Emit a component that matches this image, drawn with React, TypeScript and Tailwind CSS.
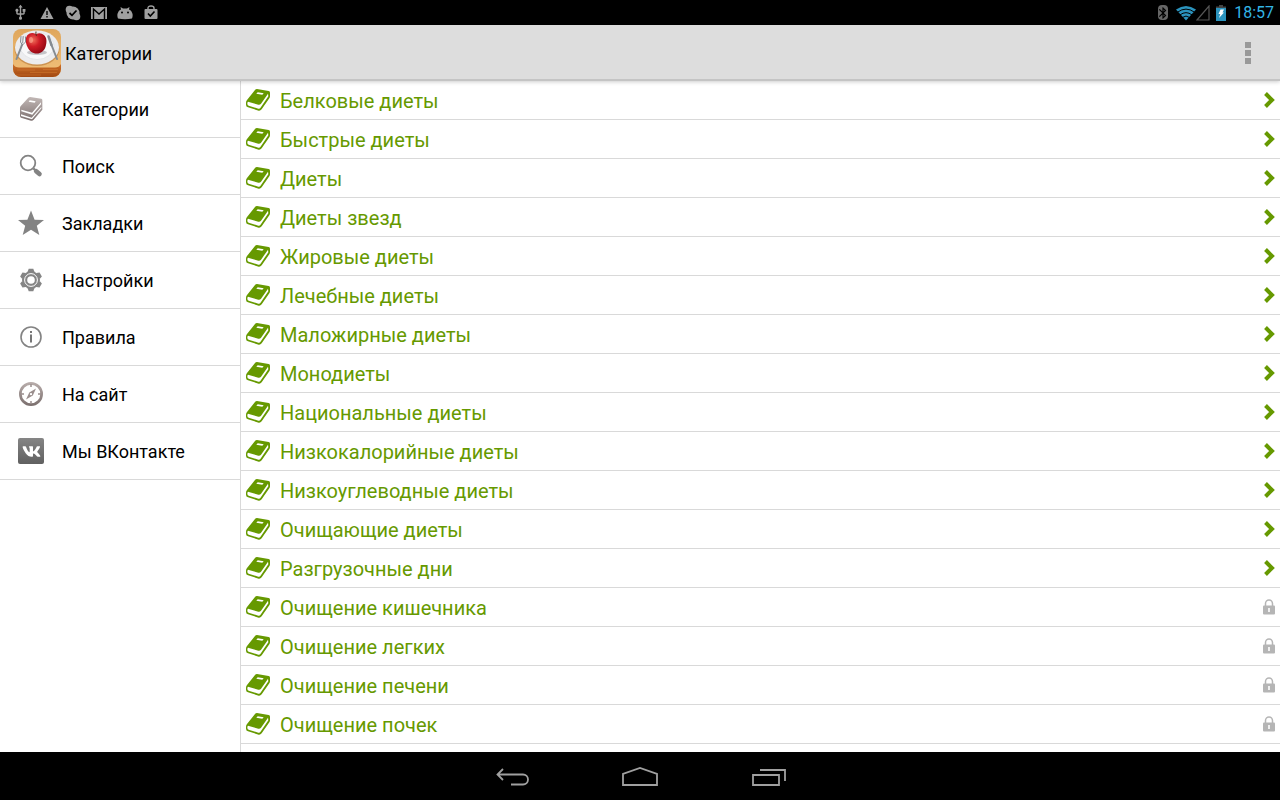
import type { ReactNode } from "react";
import { FaVk } from "react-icons/fa";
import { MdBluetooth, MdUsb } from "react-icons/md";

const categories = [
  { title: "Белковые диеты", locked: false },
  { title: "Быстрые диеты", locked: false },
  { title: "Диеты", locked: false },
  { title: "Диеты звезд", locked: false },
  { title: "Жировые диеты", locked: false },
  { title: "Лечебные диеты", locked: false },
  { title: "Маложирные диеты", locked: false },
  { title: "Монодиеты", locked: false },
  { title: "Национальные диеты", locked: false },
  { title: "Низкокалорийные диеты", locked: false },
  { title: "Низкоуглеводные диеты", locked: false },
  { title: "Очищающие диеты", locked: false },
  { title: "Разгрузочные дни", locked: false },
  { title: "Очищение кишечника", locked: true },
  { title: "Очищение легких", locked: true },
  { title: "Очищение печени", locked: true },
  { title: "Очищение почек", locked: true },
];

const menuItems: { title: string; href: string; icon: ReactNode }[] = [
  { title: "Категории", href: "#categories", icon: <BooksIcon /> },
  { title: "Поиск", href: "#search", icon: <SearchIcon /> },
  { title: "Закладки", href: "#bookmarks", icon: <StarIcon /> },
  { title: "Настройки", href: "#settings", icon: <GearIcon /> },
  { title: "Правила", href: "#rules", icon: <InfoIcon /> },
  { title: "На сайт", href: "#site", icon: <CompassIcon /> },
  { title: "Мы ВКонтакте", href: "#vk", icon: <VkIcon /> },
];

function BooksIcon() {
  return (
    <svg width="24" height="24" viewBox="0 0 72 72" aria-hidden="true">
      <defs>
        <linearGradient id="books" x1="0" y1="0" x2="0" y2="72" gradientUnits="userSpaceOnUse">
          <stop offset="0" stopColor="#c2b8b6" />
          <stop offset="1" stopColor="#7d706f" />
        </linearGradient>
      </defs>
      <path
        fill="url(#books)"
        d="M28 2Q30 0 34 0L67 5Q70 6 70 10V38L44 68Q41 72 36 71L6 62Q3 61 3 56V32Q3 29 6 26Z"
      />
      <path fill="#fff" d="M7 38L39 47L66 16V22L40 53L7 43ZM6 52L38 62L67 30V34L39 67L6 57Z" />
      <path fill="#fff" d="M32 10L50 13L47 17L29 14Z" />
    </svg>
  );
}

function SearchIcon() {
  return (
    <svg width="24" height="24" viewBox="0 0 24 24" aria-hidden="true">
      <circle cx="9" cy="9" r="7.3" fill="none" stroke="#838383" strokeWidth="1.8" />
      <path d="M14.5 14.5L17 17" stroke="#838383" strokeWidth="2.4" />
      <path d="M17.2 17.2L20.5 20" stroke="#838383" strokeWidth="4.6" strokeLinecap="round" />
    </svg>
  );
}

function StarIcon() {
  return (
    <svg width="26" height="26" viewBox="0 0 26 26" aria-hidden="true">
      <path fill="#838383" d="M13 .5L16.6 9.7L26 9.9L18.8 15.7L21.300 25L13 19.8L4.7 25L7.2 15.7L0 9.9L9.4 9.7Z" />
    </svg>
  );
}

function GearIcon() {
  return (
    <svg width="22" height="24" viewBox="-11 -12 22 24" aria-hidden="true">
      <g fill="#858585">
        {[0, 60, 120, 180, 240, 300].map((angle) => (
          <path key={angle} transform={`rotate(${angle})`} d="M-3.500-8L-2.300-11.200H2.300L3.500-8Z" />
        ))}
        <circle r="9" />
      </g>
      <circle r="6.4" fill="none" stroke="#fff" strokeWidth="1" />
      <circle r="3.8" fill="#fff" />
    </svg>
  );
}

function InfoIcon() {
  return (
    <svg width="22" height="22" viewBox="0 0 22 22" aria-hidden="true">
      <circle cx="11" cy="11" r="10" fill="none" stroke="#838383" strokeWidth="1.6" />
      <rect x="10" y="5" width="2" height="2" fill="#777" />
      <rect x="10" y="8.5" width="2" height="8" fill="#777" />
    </svg>
  );
}

function CompassIcon() {
  return (
    <svg width="24" height="24" viewBox="0 0 24 24" aria-hidden="true">
      <defs>
        <linearGradient id="compass" x1="0" y1="0" x2="0" y2="1">
          <stop offset="0" stopColor="#b9aeac" />
          <stop offset="1" stopColor="#7a6e6d" />
        </linearGradient>
      </defs>
      <path
        fill="url(#compass)"
        fillRule="evenodd"
        d="M12 0A12 12 0 0 1 12 24A12 12 0 0 1 12 0ZM12 2.700A9.300 9.300 0 0 0 12 21.300A9.300 9.300 0 0 0 12 2.700Z"
      />
      <path d="M12 2v3M12 19v3M2 12h3M19 12h3" stroke="#9a8e8d" strokeWidth="1.5" />
      <path
        fill="#9a8e8d"
        fillRule="evenodd"
        d="M17 6.5L13.800 13.5L7 17.5L10.300 10.5ZM12 10.900A1.200 1.200 0 0 0 12 13.300A1.200 1.200 0 0 0 12 10.900Z"
      />
    </svg>
  );
}

function VkIcon() {
  return (
    <span className="flex size-[26px] items-center justify-center rounded-xs bg-linear-to-b from-[#858585] to-[#606060] text-white">
      <FaVk size={19} aria-hidden="true" />
    </span>
  );
}

function BookIcon() {
  return (
    <svg width="24" height="22" viewBox="0 0 72 66" aria-hidden="true">
      <path
        fill="#669900"
        d="M27 3Q29 0 33 0L68 6Q72 7 72 11V22Q72 25 70 28L47 61Q43 66 38 65L6 55Q0 53 0 47V41Q0 37 3 33Z"
      />
      <path fill="#fff" d="M6 38L37 47Q42 48 45 44L66 14L67 22L43 57Q41 60 37 59L8 50Q4 48 4 44Q4 40 6 38Z" />
      <path fill="#fff" d="M35 10L53 13L49 17L31 14Z" />
    </svg>
  );
}

function ChevronIcon() {
  return (
    <svg width="12" height="16" viewBox="0 0 12 16" aria-hidden="true">
      <path d="M2.500 1.500L9 8L2.500 14.500" fill="none" stroke="#669900" strokeWidth="4" />
    </svg>
  );
}

function LockIcon() {
  return (
    <svg width="12" height="16" viewBox="0 0 12 16" aria-hidden="true">
      <path d="M2.500 7V4.500A3.500 3.500 0 0 1 9.500 4.500V7" fill="none" stroke="#b5b5b5" strokeWidth="1.5" />
      <rect y="6.5" width="12" height="9" rx="1" fill="#b5b5b5" />
      <path d="M6 9v4" stroke="#fff" strokeWidth="1.6" />
    </svg>
  );
}

function AppIcon() {
  return (
    <svg width="48" height="48" viewBox="0 0 48 48" aria-hidden="true">
      <defs>
        <clipPath id="app-shape">
          <rect width="48" height="48" rx="8" />
        </clipPath>
        <linearGradient id="wood" x1="0" y1="0" x2="0" y2="1">
          <stop offset="0" stopColor="#dfa65c" />
          <stop offset="1" stopColor="#f2c27c" />
        </linearGradient>
        <linearGradient id="wood-edge" x1="0" y1="0" x2="0" y2="1">
          <stop offset="0" stopColor="#cc7028" />
          <stop offset="1" stopColor="#a34a14" />
        </linearGradient>
        <radialGradient id="apple" cx=".35" cy=".35" r=".7">
          <stop offset="0" stopColor="#f0705a" />
          <stop offset=".45" stopColor="#cf1c26" />
          <stop offset="1" stopColor="#930713" />
        </radialGradient>
      </defs>
      <g clipPath="url(#app-shape)">
        <rect width="48" height="48" fill="url(#wood)" />
        <path d="M0 35Q2 38.500 6 38.500H42Q46 38.500 48 35V48H0Z" fill="url(#wood-edge)" />
        <path d="M4 41h18M17 43.500h27M3 46h25M30 40.500h15" stroke="#e08a3c" strokeWidth=".6" opacity=".6" />
        <ellipse cx="24" cy="20" rx="22.500" ry="17" fill="#b87a3c" opacity=".6" />
        <ellipse cx="24" cy="18.500" rx="22" ry="17" fill="#ececee" />
        <ellipse cx="24" cy="17" rx="17" ry="13.500" fill="#f8f8f9" stroke="#dddfe2" strokeWidth=".7" />
        <ellipse cx="24" cy="23.500" rx="10" ry="2.500" fill="#c4c4c8" />
        <path
          d="M23 5Q18 2.500 14.500 6C12 9 12.500 14 14.500 18C16.500 22 19 24.500 24 24.500C28 24.500 31 22 32.500 18C34 13 34 9 31 6Q27.500 3 23 5Z"
          fill="url(#apple)"
        />
        <path d="M23.500 7Q22.500 5 23 2.500" stroke="#56341c" strokeWidth="1" fill="none" />
        <ellipse cx="18" cy="11" rx="2" ry="3" fill="#ffb39a" opacity=".6" />
        <g fill="none" stroke="#858b92" strokeLinecap="round">
          <path d="M9 16L3.500 30" strokeWidth="2" />
          <path d="M8 7.500L7.500 13L9.500 16L12.500 13V8M10.200 7.500L9.700 14" strokeWidth="1" />
          <path d="M38.500 16L44 30" strokeWidth="2" />
          <path d="M35.500 7.500L38.500 16" strokeWidth="2.500" />
        </g>
      </g>
    </svg>
  );
}

function StatusBar() {
  return (
    <div className="flex h-[25px] items-center justify-between bg-black pr-1.5 pl-3 text-[#a0a0a0]">
      <div className="flex items-center gap-2.5">
        <MdUsb size={17} aria-hidden="true" />
        <svg width="16" height="16" viewBox="0 0 16 16" aria-hidden="true">
          <path d="M8 2L14.500 14H1.500Z" fill="#a0a0a0" />
          <path d="M8 6v4M8 11v1.500" stroke="#000" strokeWidth="1.4" />
        </svg>
        <svg width="16" height="16" viewBox="0 0 16 16" aria-hidden="true">
          <circle cx="8" cy="8" r="6.5" fill="#a0a0a0" />
          <circle cx="4.500" cy="4.500" r="3.8" fill="#a0a0a0" />
          <circle cx="11.500" cy="11.500" r="3.8" fill="#a0a0a0" />
          <path d="M4.500 8L7 10.300L11.500 5.500" fill="none" stroke="#000" strokeWidth="1.7" />
        </svg>
        <svg width="16" height="16" viewBox="0 0 16 16" aria-hidden="true">
          <rect x="0" y="2" width="16" height="12" fill="#a0a0a0" />
          <path d="M2.500 14V4L8 9L13.500 4V14" fill="none" stroke="#000" strokeWidth="1.4" />
        </svg>
        <svg width="16" height="16" viewBox="0 0 16 16" aria-hidden="true">
          <path
            d="M1 13.500Q-.5 10 1.500 6.500Q2.500 5 4 4.500L3.500 2L6 3.500H10L12.500 2L12 4.500Q13.500 5 14.500 6.500Q16.500 10 15 13.500Q8 15 1 13.500Z"
            fill="#a0a0a0"
          />
          <circle cx="5" cy="7.500" r="1" fill="#000" />
          <circle cx="11" cy="7.500" r="1" fill="#000" />
        </svg>
        <svg width="16" height="16" viewBox="0 0 16 16" aria-hidden="true">
          <path d="M5 5V3Q5 1 8 1Q11 1 11 3V5" fill="none" stroke="#a0a0a0" strokeWidth="1.4" />
          <rect x="1.500" y="4" width="13" height="10" rx="1" fill="#a0a0a0" />
          <path d="M5 8.500L7.300 11L11.500 6.500" fill="none" stroke="#000" strokeWidth="1.6" />
        </svg>
      </div>
      <div className="flex items-center">
        <span className="mr-2 flex h-[15px] w-2.5 items-center justify-center rounded bg-[#666] text-black">
          <MdBluetooth className="shrink-0" size={14} aria-hidden="true" />
        </span>
        <svg width="20" height="16" viewBox="0 0 20 16" aria-hidden="true">
          <path d="M0 4.500Q10-2.500 20 4.500L10 15.500Z" fill="#2b93bd" />
          <path
            d="M1.500 7.200Q10 1 18.500 7.200M4 9.900Q10 5.400 16 9.900M6.300 12.500Q10 9.600 13.700 12.500"
            fill="none"
            stroke="#000"
            strokeWidth="1"
          />
        </svg>
        <svg width="14" height="16" viewBox="0 0 14 16" aria-hidden="true">
          <path d="M1 15L13 1V15Z" fill="none" stroke="#555" strokeWidth="1.2" />
        </svg>
        <svg width="10" height="16" viewBox="0 0 10 16" className="ml-1.5" aria-hidden="true">
          <path d="M3 0h4v1.500h3V4H0V1.500h3Z" fill="#444" />
          <rect y="3" width="10" height="13" fill="#2b93bd" />
          <path d="M4.500 4.500H8L6.500 7.500H8L3 13L4.300 9H2.500Z" fill="#fff" />
        </svg>
        <time className="ml-2 text-base leading-6 text-[#33b5e5]">18:57</time>
      </div>
    </div>
  );
}

function ActionBar() {
  return (
    <header className="z-10 flex h-14 items-center justify-between border-b-2 border-[#c4c4c4] bg-[#dddddd] pt-0.5 pr-5 pl-[13px] shadow-[0_1px_4px_rgba(0,0,0,0.2)]">
      <div className="flex items-center gap-1">
        <AppIcon />
        <h1 className="pt-0.5 text-lg">Категории</h1>
      </div>
      <button type="button" aria-label="Меню" className="flex h-12 w-6 flex-col items-center justify-center gap-0.5">
        <span className="size-1.5 bg-[#999]" />
        <span className="size-1.5 bg-[#999]" />
        <span className="size-1.5 bg-[#999]" />
      </button>
    </header>
  );
}

function Sidebar() {
  return (
    <nav className="w-[241px] shrink-0 border-r border-[#d9d9d9]" aria-label="Меню">
      {menuItems.map((item) => (
        <a key={item.href} href={item.href} className="flex h-[57px] items-center border-b border-[#d9d9d9] text-lg">
          <span className="flex w-[62px] justify-center">{item.icon}</span>
          <span className="pt-0.5">{item.title}</span>
        </a>
      ))}
    </nav>
  );
}

function CategoryList() {
  return (
    <ul className="flex-1">
      {categories.map((category) => (
        <li key={category.title} className="border-b border-[#d9d9d9]">
          <a href="#category" className="flex h-[38px] items-center pr-[5px] pl-[5px] text-xl text-[#669900]">
            <BookIcon />
            <span className="ml-2.5 flex-1 pt-0.5">{category.title}</span>
            {category.locked ? <LockIcon /> : <ChevronIcon />}
          </a>
        </li>
      ))}
    </ul>
  );
}

function NavigationBar() {
  return (
    <div className="flex h-12 items-center justify-center gap-[90px] bg-black pt-0.5 text-[#a0a0a0]">
      <button type="button" aria-label="Назад">
        <svg width="38" height="24" viewBox="0 0 38 24" fill="none" stroke="currentColor" strokeWidth="1.8" aria-hidden="true">
          <path d="M10 4L4.500 9.500L10 15M4.500 9.500H30A5 5 0 0 1 30 19.500H18" />
        </svg>
      </button>
      <button type="button" aria-label="Домой">
        <svg width="38" height="24" viewBox="0 0 38 24" fill="none" stroke="currentColor" strokeWidth="1.8" aria-hidden="true">
          <path d="M2 20V9L19 3L36 9V20Z" />
        </svg>
      </button>
      <button type="button" aria-label="Недавние">
        <svg width="38" height="24" viewBox="0 0 38 24" fill="none" stroke="currentColor" strokeWidth="1.8" aria-hidden="true">
          <path d="M4 10H30V20H4ZM11 5H36V16" />
        </svg>
      </button>
    </div>
  );
}

export default function App() {
  return (
    <div className="flex min-h-screen flex-col bg-white font-[Roboto,sans-serif] text-black">
      <StatusBar />
      <ActionBar />
      <main className="flex flex-1">
        <Sidebar />
        <div className="flex flex-1" id="categories">
          <CategoryList />
        </div>
      </main>
      <NavigationBar />
    </div>
  );
}
